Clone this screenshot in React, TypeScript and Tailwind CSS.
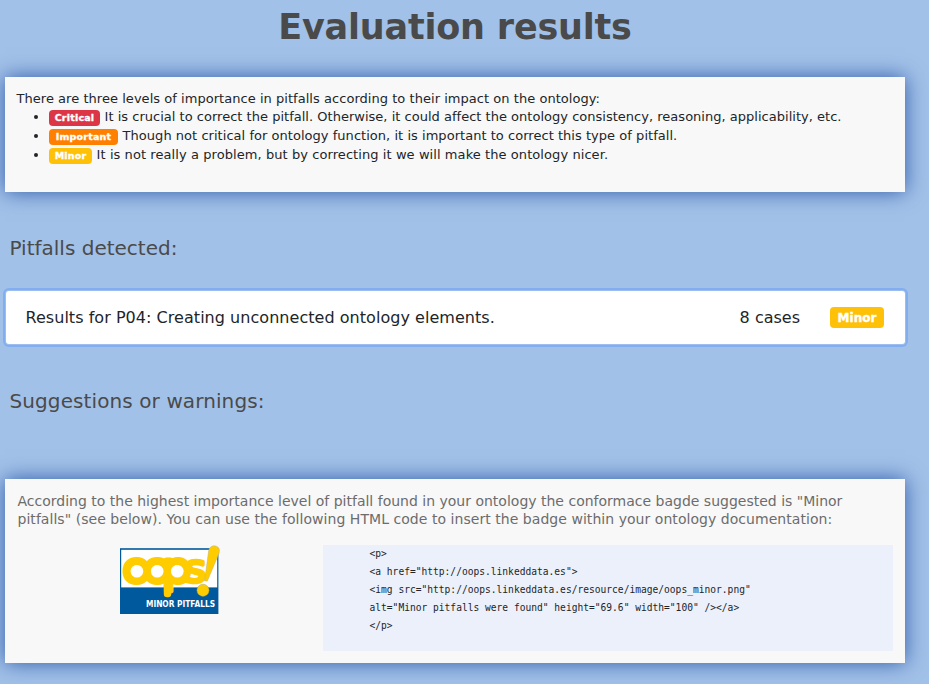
import React from 'react';

const levels = [
  { name: 'Critical', badge: 'bg-[#dc3545] w-[51px]', spacing: 'tracking-[0.016px]', text: 'It is crucial to correct the pitfall. Otherwise, it could affect the ontology consistency, reasoning, applicability, etc.' },
  { name: 'Important', badge: 'bg-[#ff8000] w-[69px]', spacing: 'tracking-[0.035px]', text: 'Though not critical for ontology function, it is important to correct this type of pitfall.' },
  { name: 'Minor', badge: 'bg-[#ffc107] w-[43px]', spacing: 'tracking-[0.075px]', text: 'It is not really a problem, but by correcting it we will make the ontology nicer.' },
];

const snippet = `<p>
<a href="http://oops.linkeddata.es">
<img src="http://oops.linkeddata.es/resource/image/oops_minor.png"
alt="Minor pitfalls were found" height="69.6" width="100" /></a>
</p>`;

function OopsBadge() {
  return (
    <svg width="100" height="70" viewBox="0 0 100 70" className="shrink-0 overflow-visible">
      <rect x="0" y="3.2" width="98.4" height="65.8" fill="#00599c" />
      <rect x="1.2" y="4.8" width="96" height="37.6" fill="#fff" />
      <g
        fontFamily="'DejaVu Sans', sans-serif"
        fill="#ffcc00"
        stroke="#ffcc00"
        strokeWidth="5"
        strokeLinejoin="round"
        transform="scale(1.09 1)"
      >
        <text x="2.8 21.7 39" y="37.2" fontSize="41">oop</text>
        <text x="59.2" y="36.8" fontSize="38" strokeWidth="3.6">s</text>
      </g>
      <rect x="43.8" y="24" width="7.4" height="28.3" rx="3.2" fill="#ffcc00" />
      <g fill="#fff">
        <circle cx="16.9" cy="26.2" r="6.3" />
        <circle cx="37.2" cy="26.2" r="6.3" />
        <circle cx="57.3" cy="26.2" r="6.3" />
      </g>
      <path d="M84.6 36 L88.6 6 C89.4 1.8 92.5 0.4 95.6 1 C99.2 1.8 100.2 5 98.8 8.8 L87.4 36 Z" fill="#ffcc00" stroke="#b9b08a" strokeWidth="0.5" />
      <circle cx="83" cy="45.3" r="6.1" fill="#ffcc00" stroke="#8c9a55" strokeWidth="0.4" />
      <text x="26" y="62.4" fontFamily="'DejaVu Sans', sans-serif" fontWeight="700" fontSize="8" fill="#fff" textLength="69" lengthAdjust="spacingAndGlyphs">
        MINOR PITFALLS
      </text>
    </svg>
  );
}

export default function App() {
  return (
    <div className="flex h-[684px] w-full flex-col overflow-hidden bg-[#a2c1e8] pl-[5px] font-['DejaVu_Sans',Verdana,sans-serif] text-[#212529]">
      <h1 className="h-[77px] w-[900px] shrink-0 pt-[5px] text-center text-[35px] leading-[44px] font-bold tracking-[-0.2px] whitespace-nowrap text-[#4a4a4a]">Evaluation results</h1>

      <section className="h-[115px] w-[900px] shrink-0 bg-[#f8f8f8] pt-[12px] pl-[11px] text-[13px] whitespace-nowrap shadow-[0_0_20px_#2f5ba8]">
        <p className="pl-[0.5px] leading-[19px] tracking-[0.04px]">There are three levels of importance in pitfalls according to their impact on the ontology:</p>
        <ul className="-mt-px">
          {levels.map((level) => (
            <li key={level.name} className="flex h-[19px] items-center pl-[18px]">
              <span className="mt-px mr-[11px] size-[4px] rounded-full bg-[#212529]" />
              <span className={`mt-[3px] flex h-[16px] items-center justify-center rounded-[4px] text-[9.5px] leading-[16px] font-bold tracking-[0.2px] text-white [-webkit-text-stroke:0.35px_white] ${level.badge}`}>{level.name}</span>
              <span className={`ml-[4.6px] leading-[19px] ${level.spacing}`}>{level.text}</span>
            </li>
          ))}
        </ul>
      </section>

      <h2 className="mt-[42px] ml-[4.5px] h-[28px] shrink-0 text-[20px] leading-[28px] whitespace-nowrap text-[#4a4a4a]">Pitfalls detected:</h2>

      <button className="mt-[29px] ml-px flex h-[53px] w-[899px] shrink-0 items-center rounded-[3px] bg-white pr-[21px] pl-[19.5px] text-left text-[16px] whitespace-nowrap shadow-[0_0_0_1px_#9dbdf0,0_0_0_3px_#80aeef]">
        <span className="grow tracking-[0.04px]">Results for P04: Creating unconnected ontology elements.</span>
        <span className="mr-[30px]">8 cases</span>
        <span className="flex h-[21px] w-[54px] items-center justify-center rounded-[4px] bg-[#ffc107] text-[12px] font-bold text-white [-webkit-text-stroke:0.4px_white]">Minor</span>
      </button>

      <h2 className="mt-[43px] ml-[4.5px] h-[28px] shrink-0 text-[20px] leading-[28px] tracking-[0.1px] whitespace-nowrap text-[#4a4a4a]">Suggestions or warnings:</h2>

      <section className="mt-[64px] h-[184px] w-[900px] shrink-0 bg-[#f8f8f8] pt-[13px] pl-[12.5px] shadow-[0_0_20px_#2f5ba8]">
        <p className="text-[14px] leading-[18px] whitespace-nowrap text-[#6c6c6c]">
          According to the highest importance level of pitfall found in your ontology the conformace bagde suggested is "Minor
          <br />
          <span className="tracking-[0.045px]">pitfalls" (see below). You can use the following HTML code to insert the badge within your ontology documentation:</span>
        </p>
        <div className="mt-[17px] flex pl-[102.5px]">
          <OopsBadge />
          <pre className="ml-[103px] h-[106px] w-[570px] bg-[#ecf0fa] pl-[46.5px] font-['DejaVu_Sans_Mono',monospace] text-[9.6px] leading-[18px] text-[#212529]">{snippet}</pre>
        </div>
      </section>
    </div>
  );
}
